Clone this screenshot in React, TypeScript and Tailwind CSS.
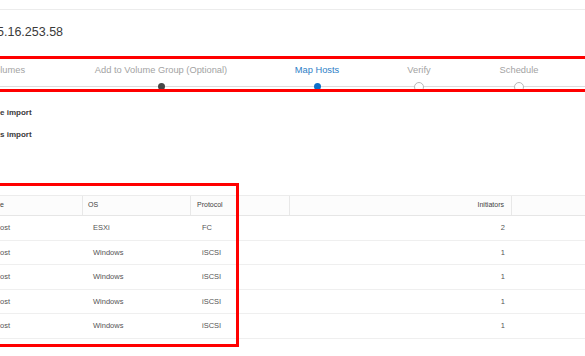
import React from 'react';

const steps = [
  { label: 'Select Volumes', w: 'w-[66px]', state: 'hidden' },
  { label: 'Add to Volume Group (Optional)', w: 'w-[132px]', state: 'done' },
  { label: 'Map Hosts', w: 'w-[42px]', state: 'current' },
  { label: 'Verify', w: 'w-[24px]', state: 'todo' },
  { label: 'Schedule', w: 'w-[38px]', state: 'todo' },
];

const hosts = [
  { os: 'ESXi', protocol: 'FC', initiators: 2 },
  { os: 'Windows', protocol: 'iSCSI', initiators: 1 },
  { os: 'Windows', protocol: 'iSCSI', initiators: 1 },
  { os: 'Windows', protocol: 'iSCSI', initiators: 1 },
  { os: 'Windows', protocol: 'iSCSI', initiators: 1 },
];

const Dot: React.FC<{ state: string }> = ({ state }) => {
  if (state === 'done') return <span className="h-[7px] w-[7px] rounded-full bg-[#474747]" />;
  if (state === 'current') return <span className="h-[7px] w-[7px] rounded-full bg-[#0f6fc9]" />;
  if (state === 'todo') return <span className="h-[10px] w-[10px] rounded-full border-[1.5px] border-[#b9b9b9] bg-white" />;
  return null;
};

const App: React.FC = () => {
  return (
    <div className="relative h-[356px] w-[585px] overflow-hidden bg-white font-['Liberation_Sans',Arial,sans-serif] text-[#333]">
      {/* top bar */}
      <div className="h-[10px] border-b border-[#ececec]" />

      {/* title */}
      <div className="flex h-[44px] items-center">
        <h1 className="ml-[-3px] text-[12.5px] text-[#3a3a3a]">5.16.253.58</h1>
      </div>

      {/* wizard steps */}
      <div className="pt-[10px]">
        <div className="ml-[-40px] flex gap-[69px]">
          {steps.map(s => (
            <div key={s.label} className={`${s.w} flex shrink-0 justify-center`}>
              <span
                className={`whitespace-nowrap text-[9.3px] leading-[12px] ${
                  s.state === 'current' ? 'text-[#2d7ec6]' : 'text-[#a3a3a3]'
                }`}
              >
                {s.label}
              </span>
            </div>
          ))}
        </div>
        <div className="mt-[10px] h-px bg-[#dcdcdc]" />
        <div className="ml-[-40px] mt-[-5px] flex h-[9px] gap-[69px]">
          {steps.map(s => (
            <div key={s.label} className={`${s.w} flex shrink-0 items-center justify-center`}>
              <Dot state={s.state} />
            </div>
          ))}
        </div>
      </div>

      {/* import options */}
      <div className="mt-[16px] flex flex-col gap-[10px] text-[8px] font-bold leading-[12px] text-[#3a3a3a]">
        <span>e import</span>
        <span>s import</span>
      </div>

      {/* hosts table */}
      <div className="mt-[54px] border-t border-[#ececec] text-[7.5px]">
        <div className="flex h-[20px] border-b border-[#e6e6e6] bg-[#fcfcfc] text-[7px] text-[#3f3f3f]">
          <div className="flex w-[83px] shrink-0 items-center border-r border-[#e8e8e8]">e</div>
          <div className="flex w-[108px] shrink-0 items-center border-r border-[#e8e8e8] pl-[5px]">OS</div>
          <div className="flex w-[99px] shrink-0 items-center border-r border-[#e8e8e8] pl-[6px]">Protocol</div>
          <div className="flex w-[222px] shrink-0 items-center justify-end border-r border-[#e8e8e8] pr-[7px]">Initiators</div>
          <div className="flex-1" />
        </div>
        {hosts.map((h, i) => (
          <div key={i} className="flex h-[24.5px] items-center border-b border-[#efefef] text-[#555]">
            <div className="w-[83px] shrink-0">ost</div>
            <div className="w-[108px] shrink-0 pl-[10px]">{h.os}</div>
            <div className="w-[99px] shrink-0 pl-[11px]">{h.protocol}</div>
            <div className="w-[222px] shrink-0 pr-[7px] text-right">{h.initiators}</div>
          </div>
        ))}
      </div>

      {/* red annotation boxes */}
      <div className="absolute left-[-5px] top-[56px] h-[36px] w-[600px] border-[3px] border-[#ff0000]" />
      <div className="absolute left-[-5px] top-[183px] h-[164px] w-[244px] border-[3px] border-[#ff0000]" />
    </div>
  );
};

export default App;
